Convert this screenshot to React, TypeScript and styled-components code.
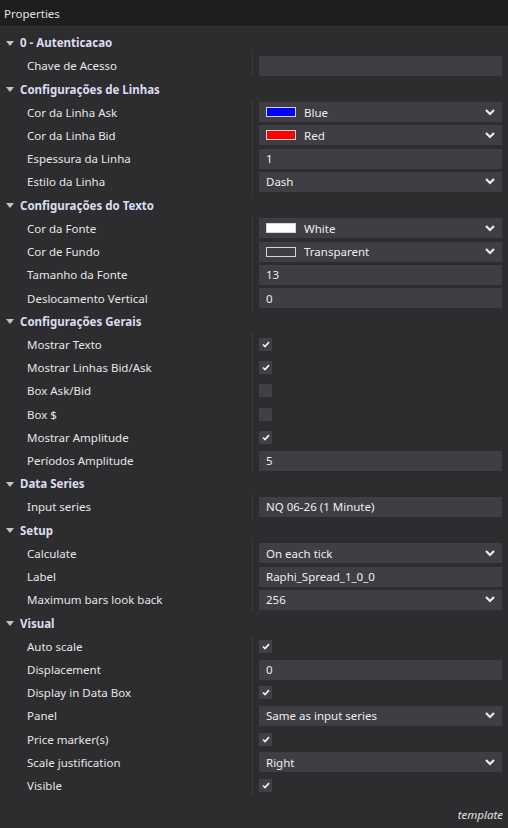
import React from "react";
import styled, { createGlobalStyle } from "styled-components";

const GlobalStyle = createGlobalStyle`
  html, body {
    margin: 0;
    padding: 0;
    background: #2d2d30;
  }
  * {
    box-sizing: border-box;
  }
`;

type Prop =
  | { name: string; kind: "text"; value: string }
  | { name: string; kind: "select"; value: string }
  | { name: string; kind: "color"; value: string; swatch: string }
  | { name: string; kind: "check"; checked: boolean };

interface Group {
  title: string;
  props: Prop[];
}

const groups: Group[] = [
  {
    title: "0 - Autenticacao",
    props: [{ name: "Chave de Acesso", kind: "text", value: "" }],
  },
  {
    title: "Configurações de Linhas",
    props: [
      { name: "Cor da Linha Ask", kind: "color", value: "Blue", swatch: "#0000ff" },
      { name: "Cor da Linha Bid", kind: "color", value: "Red", swatch: "#ff0000" },
      { name: "Espessura da Linha", kind: "text", value: "1" },
      { name: "Estilo da Linha", kind: "select", value: "Dash" },
    ],
  },
  {
    title: "Configurações do Texto",
    props: [
      { name: "Cor da Fonte", kind: "color", value: "White", swatch: "#ffffff" },
      { name: "Cor de Fundo", kind: "color", value: "Transparent", swatch: "transparent" },
      { name: "Tamanho da Fonte", kind: "text", value: "13" },
      { name: "Deslocamento Vertical", kind: "text", value: "0" },
    ],
  },
  {
    title: "Configurações Gerais",
    props: [
      { name: "Mostrar Texto", kind: "check", checked: true },
      { name: "Mostrar Linhas Bid/Ask", kind: "check", checked: true },
      { name: "Box Ask/Bid", kind: "check", checked: false },
      { name: "Box $", kind: "check", checked: false },
      { name: "Mostrar Amplitude", kind: "check", checked: true },
      { name: "Períodos Amplitude", kind: "text", value: "5" },
    ],
  },
  {
    title: "Data Series",
    props: [{ name: "Input series", kind: "text", value: "NQ 06-26 (1 Minute)" }],
  },
  {
    title: "Setup",
    props: [
      { name: "Calculate", kind: "select", value: "On each tick" },
      { name: "Label", kind: "text", value: "Raphi_Spread_1_0_0" },
      { name: "Maximum bars look back", kind: "select", value: "256" },
    ],
  },
  {
    title: "Visual",
    props: [
      { name: "Auto scale", kind: "check", checked: true },
      { name: "Displacement", kind: "text", value: "0" },
      { name: "Display in Data Box", kind: "check", checked: true },
      { name: "Panel", kind: "select", value: "Same as input series" },
      { name: "Price marker(s)", kind: "check", checked: true },
      { name: "Scale justification", kind: "select", value: "Right" },
      { name: "Visible", kind: "check", checked: true },
    ],
  },
];

const Window = styled.div`
  width: 508px;
  height: 828px;
  background: #2d2d30;
  font-family: "Noto Sans", "Open Sans", sans-serif;
  font-size: 11.5px;
  color: #e6e6e6;
  display: flex;
  flex-direction: column;
  overflow: hidden;
`;

const TitleBar = styled.div`
  height: 27px;
  background: #1e1e1f;
  border-bottom: 1px solid #343436;
  padding: 0 4px;
  display: flex;
  align-items: center;
  color: #e2e2e2;
  flex-shrink: 0;
`;

const List = styled.div`
  padding-top: 4px;
  display: flex;
  flex-direction: column;
`;

const GroupHeader = styled.div`
  height: 23.22px;
  display: flex;
  align-items: center;
  padding-left: 6px;
  gap: 6px;
  font-weight: 700;
  color: #dcdcf0;
`;

const Arrow = styled.span`
  width: 0;
  height: 0;
  border-left: 4px solid transparent;
  border-right: 4px solid transparent;
  border-top: 5px solid #c4c4c4;
  margin-top: 1px;
`;

const Row = styled.div`
  height: 23.22px;
  display: flex;
`;

const NameCell = styled.div`
  width: 253px;
  flex-shrink: 0;
  border-right: 1px solid #3d3d40;
  padding-left: 27px;
  display: flex;
  align-items: center;
  white-space: nowrap;
`;

const ValueCell = styled.div`
  flex: 1;
  padding: 0 6px 0 6px;
  display: flex;
  align-items: center;
`;

const Field = styled.div`
  width: 100%;
  height: 20px;
  background: #3e3e44;
  padding: 0 7px;
  display: flex;
  align-items: center;
  gap: 8px;
  color: #eeeeee;
  white-space: nowrap;
`;

const FieldText = styled.span`
  flex: 1;
`;

const Swatch = styled.span<{ $color: string }>`
  width: 30px;
  height: 10px;
  background: ${(p) => p.$color};
  border: 1px solid #d4d4d4;
  flex-shrink: 0;
`;

const Box = styled.div`
  width: 13px;
  height: 13px;
  background: #404046;
  display: flex;
  align-items: center;
  justify-content: center;
`;

const Footer = styled.div`
  flex: 1;
  display: flex;
  align-items: flex-end;
  justify-content: flex-end;
  padding: 0 5px 6px 0;
  font-style: italic;
  font-size: 11.5px;
  color: #e0e0e0;
`;

const Chevron = () => (
  <svg width="10" height="7" viewBox="0 0 10 7">
    <polyline points="1,1 5,5 9,1" fill="none" stroke="#ececec" strokeWidth="2.2" />
  </svg>
);

const Tick = () => (
  <svg width="8" height="7" viewBox="0 0 8 7">
    <polyline points="1,3.5 3,5.5 7,1.2" fill="none" stroke="#f2f2f2" strokeWidth="1.7" />
  </svg>
);

const Value = ({ prop }: { prop: Prop }) => {
  switch (prop.kind) {
    case "check":
      return <Box>{prop.checked && <Tick />}</Box>;
    case "color":
      return (
        <Field>
          <Swatch $color={prop.swatch} />
          <FieldText>{prop.value}</FieldText>
          <Chevron />
        </Field>
      );
    case "select":
      return (
        <Field>
          <FieldText>{prop.value}</FieldText>
          <Chevron />
        </Field>
      );
    default:
      return (
        <Field>
          <FieldText>{prop.value}</FieldText>
        </Field>
      );
  }
};

export default function App() {
  return (
    <>
      <GlobalStyle />
      <Window>
        <TitleBar>Properties</TitleBar>
        <List>
          {groups.map((g) => (
            <React.Fragment key={g.title}>
              <GroupHeader>
                <Arrow />
                {g.title}
              </GroupHeader>
              {g.props.map((p) => (
                <Row key={p.name}>
                  <NameCell>{p.name}</NameCell>
                  <ValueCell>
                    <Value prop={p} />
                  </ValueCell>
                </Row>
              ))}
            </React.Fragment>
          ))}
        </List>
        <Footer>template</Footer>
      </Window>
    </>
  );
}
